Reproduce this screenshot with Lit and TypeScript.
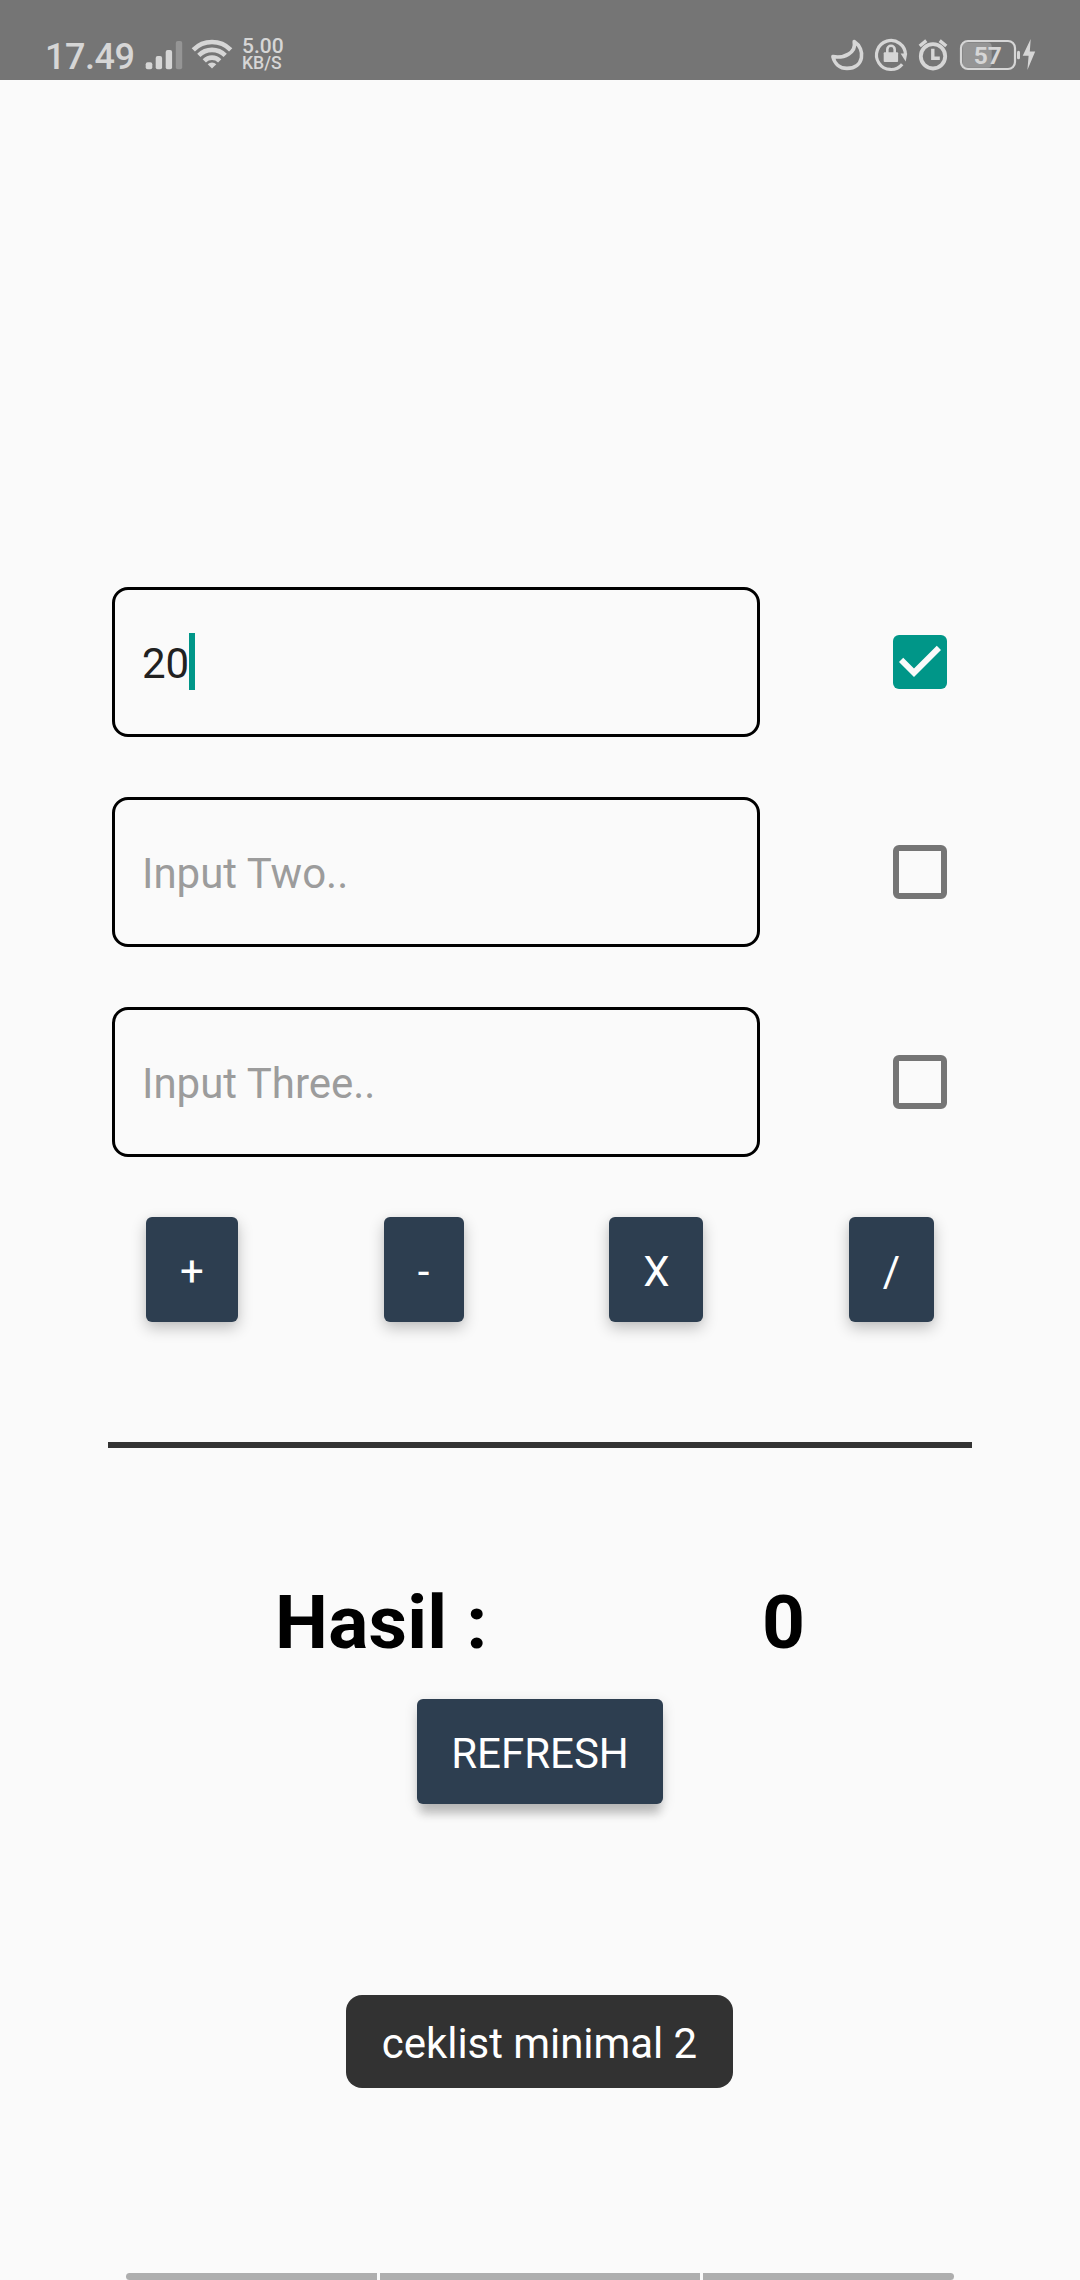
import { LitElement, html, css, nothing } from "lit";
import { customElement, property, state } from "lit/decorators.js";

@customElement("status-bar")
class StatusBar extends LitElement {
  static styles = css`
    :host { display: flex; justify-content: space-between; height: 80px; background: #757575; color: #d6d6d6; font-family: Roboto, sans-serif; }
    .side { display: flex; }
    .left { padding-left: 45px; }
    .right { padding-right: 42px; }
    svg { display: block; height: 80px; fill: currentColor; }
    .line { fill: none; stroke: currentColor; }
    .time { width: 98px; font-size: 36px; font-weight: 500; line-height: 42px; padding-top: 36px; letter-spacing: -0.5px; white-space: nowrap; }
    .rate { display: flex; flex-direction: column; padding: 38px 0 0 7px; font-weight: 500; white-space: nowrap; }
    .num { font-size: 21px; line-height: 17px; }
    .unit { font-size: 17.6px; line-height: 17px; }
    .level { font: 700 24.5px Roboto, sans-serif; }
    .dim { fill: #959595; }
  `;
  render() {
    return html`
      <div class="side left">
        <span class="time">17.49</span>
        <svg width="45" viewBox="143 0 45 80">
          <rect x="145.7" y="62.3" width="6.6" height="7" rx="2" />
          <rect x="155.7" y="56" width="6.4" height="13.3" rx="2" />
          <rect x="165.7" y="50" width="6.4" height="19.3" rx="2" />
          <rect class="dim" x="175.8" y="41" width="6.4" height="28.3" rx="2" />
        </svg>
        <svg width="47" viewBox="188 0 47 80">
          <g class="line" stroke-width="4.6">
            <path d="M193.3 49.8A26.4 26.4 0 0 1 230.7 49.8" />
            <path d="M198.8 55.3A18.7 18.7 0 0 1 225.2 55.3" />
            <path d="M204.3 60.8A11 11 0 0 1 219.7 60.8" />
          </g>
          <path d="M212 68.5L207.7 64.2A6 6 0 0 1 216.3 64.2Z" />
        </svg>
        <div class="rate"><span class="num">5.00</span><span class="unit">KB/S</span></div>
      </div>
      <div class="side right">
        <svg width="42" viewBox="828 0 42 80">
          <path class="line" stroke-width="3.6" stroke-linejoin="round" d="M832.9 56.6C844 58.5 856.5 53 854.2 41.6C866 49 864 68.4 847 68.4C840 68.4 834.6 64 832.9 56.6Z" />
        </svg>
        <svg width="43" viewBox="870 0 43 80">
          <path class="line" stroke-width="3.2" d="M902.2 64.2A14.5 14.5 0 1 1 905.5 55" />
          <path d="M900.6 53.6H907.2L905.7 61.5Z" />
          <rect x="883.7" y="52.3" width="14.4" height="9.8" rx="1" />
          <path class="line" stroke-width="2.6" d="M887.3 53V49.5A3.7 3.7 0 0 1 894.7 49.5V53" />
        </svg>
        <svg width="42" viewBox="913 0 42 80">
          <g class="line">
            <circle cx="933" cy="56.3" r="12.2" stroke-width="3.8" />
            <path stroke-width="3.4" d="M932.8 48.7V58.2H939.8M919.7 46L926.3 40.6M946.3 46L939.7 40.6" />
          </g>
        </svg>
        <svg width="83" viewBox="955 0 83 80">
          <rect class="dim" x="962.7" y="42.5" width="29" height="25.2" rx="4" />
          <rect class="line" x="961" y="41" width="54" height="28" rx="7" stroke-width="2.2" />
          <rect x="1017" y="50.8" width="3" height="8.4" rx="1.5" />
          <text class="level" x="973.7" y="64">57</text>
          <path d="M1030.7 39L1022.7 55.7H1028.6L1027.4 70L1035.2 51.5H1029.8Z" />
        </svg>
      </div>
    `;
  }
}

@customElement("input-row")
class InputRow extends LitElement {
  @property() value = "";
  @property() hint = "";
  @property({ type: Boolean }) checked = false;
  static styles = css`
    :host { display: flex; align-items: center; justify-content: space-between; height: 150px; font-family: Roboto, sans-serif; }
    .field { box-sizing: border-box; display: flex; align-items: center; width: 648px; height: 150px; padding: 0 27px; border: 3px solid #000; border-radius: 16px; font-size: 42px; line-height: 50px; }
    .value, .hint { padding-top: 3px; white-space: nowrap; }
    .value { color: #212121; }
    .hint { color: #9c9c9c; }
    .caret { width: 6px; height: 57px; margin-bottom: 1px; background: #009688; }
    .box { box-sizing: border-box; width: 54px; height: 54px; border: 6px solid #757575; border-radius: 6px; }
    .on { border: 0; background: #009688; }
    svg { display: block; fill: #fafafa; }
  `;
  render() {
    return html`
      <div class="field">
        ${this.value
          ? html`<span class="value">${this.value}</span><span class="caret"></span>`
          : html`<span class="hint">${this.hint}</span>`}
      </div>
      <div class="box ${this.checked ? "on" : ""}">
        ${this.checked
          ? html`<svg width="54" height="54" viewBox="3 3 18 18"><path d="M10 17L5 12 6.41 10.59 10 14.17 17.59 6.58 19 8Z" /></svg>`
          : nothing}
      </div>
    `;
  }
}

@customElement("app-root")
class AppRoot extends LitElement {
  @state() private result = 0;
  static styles = css`
    :host { display: block; font-family: Roboto, sans-serif; }
    .screen { display: flex; flex-direction: column; height: 2280px; background: #fafafa; overflow: hidden; }
    .rows { display: flex; flex-direction: column; gap: 60px; padding: 507px 133px 0 112px; }
    .btn { box-sizing: border-box; height: 105px; padding: 4px 0 0; border: 0; border-radius: 6px; background: #2d3e50; color: #fff; font: 400 42px/50px Roboto, sans-serif; text-align: center; box-shadow: 0 6px 15px rgba(0, 0, 0, 0.24), 0 0 6px rgba(0, 0, 0, 0.04); }
    .ops { display: grid; grid-template-columns: 92px 80px 94px 85px; justify-content: space-between; padding: 60px 146px 0; }
    .rule { height: 6px; margin: 120px 108px 0; background: #333; }
    .result { display: flex; justify-content: space-between; padding: 130px 275px 0 275px; font-size: 75px; font-weight: 700; line-height: 88px; color: #000; }
    .label { letter-spacing: 0.2px; }
    .refresh { align-self: center; width: 246px; margin-top: 33px; box-shadow: 0 13px 10px -3px rgba(0, 0, 0, 0.19), 0 4px 14px rgba(0, 0, 0, 0.14); }
    .toast { box-sizing: border-box; align-self: center; width: 387px; height: 93px; margin: 191px 1px 0 0; padding-top: 24px; border-radius: 16px; background: #323232; color: #fff; font-size: 42px; line-height: 50px; letter-spacing: -0.05px; text-align: center; white-space: nowrap; }
    .nav { display: grid; grid-template-columns: 251px 320px 251px; gap: 3px; height: 7px; margin: auto 126px 0; }
    .seg { background: #aeaeae; }
    .seg:first-child { border-radius: 4px 0 0 4px; }
    .seg:last-child { border-radius: 0 4px 4px 0; }
  `;
  render() {
    return html`
      <div class="screen">
        <status-bar></status-bar>
        <div class="rows">
          <input-row value="20" checked></input-row>
          <input-row hint="Input Two.."></input-row>
          <input-row hint="Input Three.."></input-row>
        </div>
        <div class="ops">
          ${["+", "-", "X", "/"].map((op) => html`<button class="btn">${op}</button>`)}
        </div>
        <div class="rule"></div>
        <div class="result"><span class="label">Hasil :</span><span>${this.result}</span></div>
        <button class="btn refresh" @click=${() => (this.result = 0)}>REFRESH</button>
        <div class="toast">ceklist minimal 2</div>
        <div class="nav"><div class="seg"></div><div class="seg"></div><div class="seg"></div></div>
      </div>
    `;
  }
}
